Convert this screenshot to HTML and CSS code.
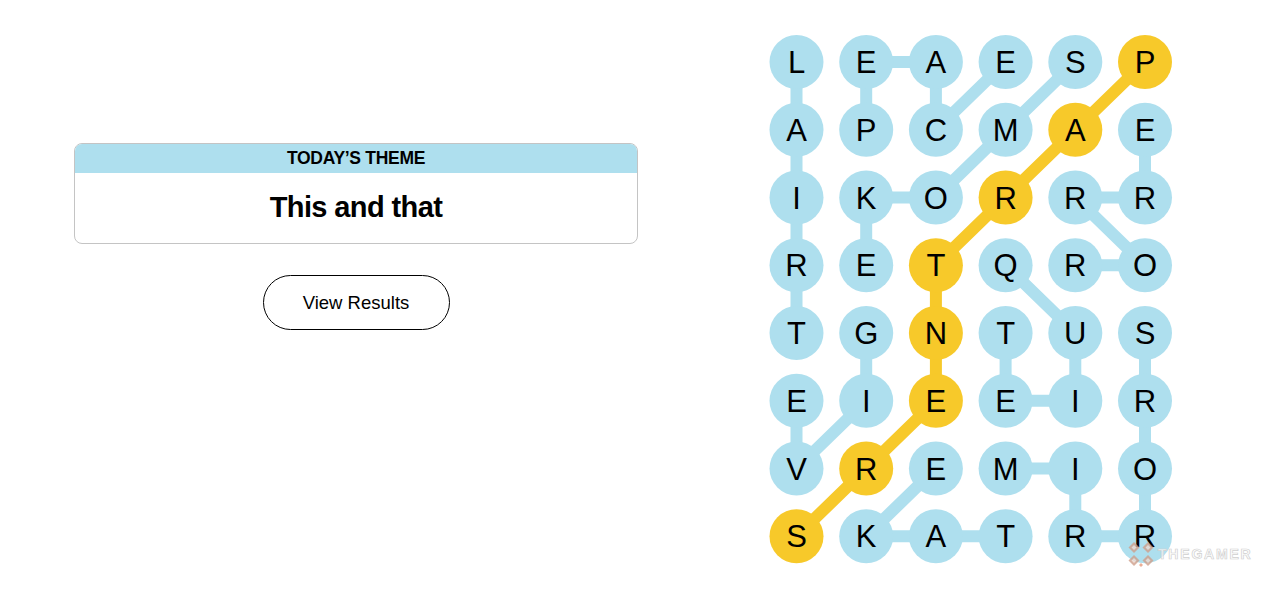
FILE: index.html
```html
<!DOCTYPE html>
<html lang="en">
<head>
<meta charset="utf-8">
<title>Strands</title>
<link rel="stylesheet" href="styles.css">
</head>
<body>
<main class="page">
  <section class="info">
    <div class="theme-card">
      <div class="theme-head">TODAY’S THEME</div>
      <div class="theme-body"><h1 class="theme-title">This and that</h1></div>
    </div>
    <button class="results-btn" type="button">View Results</button>
  </section>

  <section class="board">
    <svg class="board-svg" width="406" height="532" viewBox="0 0 406 532" xmlns="http://www.w3.org/2000/svg">
      <g id="links"></g>
      <g id="nodes"></g>
    </svg>
  </section>

  <div class="watermark">
    <svg class="wm-icon" width="28" height="26" viewBox="0 0 28 26" xmlns="http://www.w3.org/2000/svg">
      <g opacity="0.8">
        <path d="M7 1 L12.5 6.5 L7 12 L1.5 6.5 Z" fill="#cfa08c"/>
        <path d="M21 1 L26.5 6.5 L21 12 L15.5 6.5 Z" fill="#cfa08c"/>
        <path d="M7 14 L12.5 19.5 L7 25 L1.5 19.5 Z" fill="#cfa08c"/>
        <path d="M21 14 L26.5 19.5 L21 25 L15.5 19.5 Z" fill="#cfa08c"/>
        <path d="M7 4 L9.5 6.5 L7 9 L4.5 6.5 Z" fill="#fff" opacity="0.6"/>
        <path d="M21 4 L23.5 6.5 L21 9 L18.5 6.5 Z" fill="#fff" opacity="0.6"/>
        <path d="M7 17 L9.5 19.5 L7 22 L4.5 19.5 Z" fill="#fff" opacity="0.6"/>
        <path d="M21 17 L23.5 19.5 L21 22 L18.5 19.5 Z" fill="#fff" opacity="0.6"/>
        <path d="M14 22 L16 24 L14 26 L12 24 Z" fill="#e79a7c"/>
      </g>
    </svg>
    <span class="wm-text">THEGAMER</span>
  </div>
</main>
<script src="board.js"></script>
</body>
</html>
```

FILE: board.js
```js
(function () {
  var rows = ["LEAESP", "APCMAE", "IKORRR", "RETQRO", "TGNTUS", "EIEEIR", "VREMIO", "SKATRR"];
  var spangram = [[0,5],[1,4],[2,3],[3,2],[4,2],[5,2],[6,1],[7,0]];
  var words = [
    [[0,0],[1,0],[2,0],[3,0],[4,0]],
    [[1,1],[0,1],[0,2],[1,2],[0,3]],
    [[0,4],[1,3],[2,2],[2,1],[3,1]],
    [[1,5],[2,5],[2,4],[3,5],[3,4]],
    [[3,3],[4,4],[5,4],[5,3],[4,3]],
    [[4,1],[5,1],[6,0],[5,0]],
    [[7,3],[7,2],[7,1],[6,2]],
    [[6,3],[6,4],[7,4],[7,5],[6,5],[5,5],[4,5]]
  ];
  var NS = "http://www.w3.org/2000/svg";
  var X0 = 27.5, DX = 69.7, Y0 = 27, DY = 67.75, R = 27;
  function cx(c) { return X0 + DX * c; }
  function cy(r) { return Y0 + DY * r; }
  var links = document.getElementById("links");
  var nodes = document.getElementById("nodes");
  var spanSet = {};
  spangram.forEach(function (p) { spanSet[p[0] + "," + p[1]] = true; });

  function addPath(list, cls) {
    for (var i = 0; i < list.length - 1; i++) {
      var l = document.createElementNS(NS, "line");
      l.setAttribute("x1", cx(list[i][1]));
      l.setAttribute("y1", cy(list[i][0]));
      l.setAttribute("x2", cx(list[i + 1][1]));
      l.setAttribute("y2", cy(list[i + 1][0]));
      l.setAttribute("class", cls);
      links.appendChild(l);
    }
  }
  words.forEach(function (w) { addPath(w, "link"); });
  addPath(spangram, "link link-span");

  rows.forEach(function (row, r) {
    row.split("").forEach(function (ch, c) {
      var span = spanSet[r + "," + c];
      var circ = document.createElementNS(NS, "circle");
      circ.setAttribute("cx", cx(c));
      circ.setAttribute("cy", cy(r));
      circ.setAttribute("r", R);
      circ.setAttribute("class", span ? "node node-span" : "node");
      nodes.appendChild(circ);
      var t = document.createElementNS(NS, "text");
      t.setAttribute("x", cx(c));
      t.setAttribute("y", cy(r) + 11);
      t.setAttribute("class", "letter");
      t.textContent = ch;
      nodes.appendChild(t);
    });
  });
})();
```

FILE: styles.css
```css
html, body {
  margin: 0;
  padding: 0;
  background: #ffffff;
}

body {
  font-family: "Liberation Sans", Arial, sans-serif;
  color: #000;
}

.page {
  position: relative;
  display: flex;
  align-items: flex-start;
  width: 1286px;
  height: 598px;
  padding: 35px 0 0 74px;
  box-sizing: border-box;
  overflow: hidden;
}

.info {
  width: 564px;
  padding-top: 108px;
  display: flex;
  flex-direction: column;
  align-items: center;
}

.theme-card {
  width: 100%;
  box-sizing: border-box;
  border: 1px solid #c4c4c4;
  border-radius: 8px;
  overflow: hidden;
}

.theme-head {
  height: 29px;
  background: #aedfee;
  display: flex;
  align-items: center;
  justify-content: center;
  font-family: "Liberation Sans", Arial, sans-serif;
  font-weight: 700;
  font-size: 17.5px;
  letter-spacing: -0.3px;
  box-sizing: border-box;
}

.theme-body {
  height: 70px;
  display: flex;
  align-items: center;
  justify-content: center;
}

.theme-title {
  margin: 0;
  font-family: "Liberation Sans", Arial, sans-serif;
  font-weight: 700;
  font-size: 29px;
  letter-spacing: -0.6px;
  line-height: 1;
  padding-bottom: 1px;
}

.results-btn {
  margin-top: 31px;
  width: 187px;
  height: 55px;
  border: 1px solid #000;
  border-radius: 28px;
  background: #fff;
  color: #000;
  font-family: "Liberation Sans", Arial, sans-serif;
  font-size: 18.5px;
  padding: 0;
  cursor: pointer;
}

.board {
  margin-left: 131px;
}

.board-svg {
  display: block;
}

.link {
  stroke: #aedfee;
  stroke-width: 12;
  stroke-linecap: round;
}

.link-span {
  stroke: #f7c92a;
}

.node {
  fill: #aedfee;
}

.node-span {
  fill: #f7c92a;
}

.letter {
  font-family: "Liberation Sans", Arial, sans-serif;
  font-size: 31px;
  fill: #000;
  text-anchor: middle;
}

.watermark {
  position: absolute;
  left: 1127px;
  top: 541px;
  display: flex;
  align-items: center;
  gap: 3px;
}

.wm-icon {
  display: block;
}

.wm-text {
  font-family: "Liberation Sans", Arial, sans-serif;
  font-size: 14px;
  font-weight: 700;
  letter-spacing: 1.8px;
  color: rgba(255, 255, 255, 0.7);
  -webkit-text-stroke: 0.7px #cfcfcf;
}
```
